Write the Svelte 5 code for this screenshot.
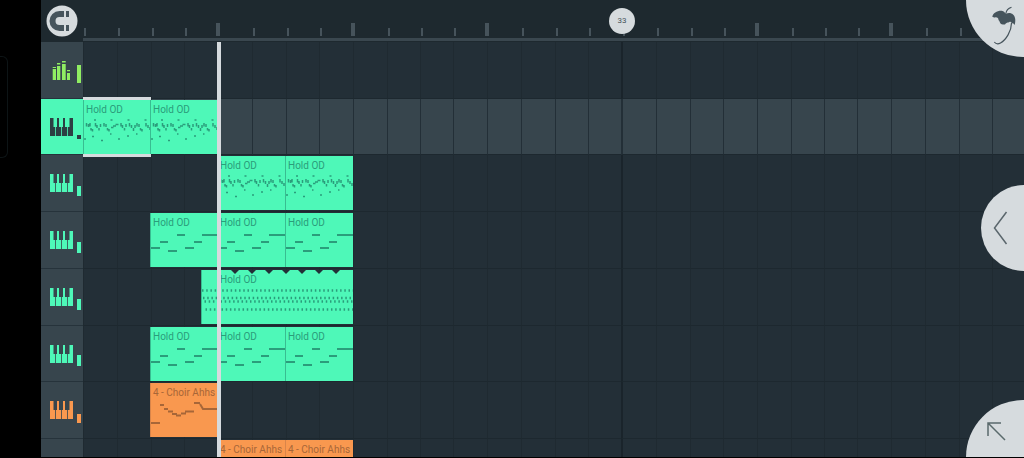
<script>
  const cells = Array.from({ length: 36 }, (_, i) => i);

  const melody = 'M0 35h9M9 29h8M17 38h9M26 22h8M34 35h9M43 29h8M51 22h17';
  const choir =
    'M0 40h9M9 22h4M13 26h4M17 28.500h5M21 31h5M25 32.500h5M30 30.500h5M34 28.500h9M43 20h6M49 21l3 5h16';
  const riff =
    'M2.500 23v3.500M4.500 24v3M6 23v3.500M7 28v2.500M8.500 29v2.500M10 20h2M11.500 23v3.500M13 25v3M15 28v2.500M16.500 24v3' +
    'M20 23v3.500M22 24v3M23.500 28v2.500M25 29v2.500M26.500 20h2M27 27.500h2.500M29 26h3M31.500 24.500h3' +
    'M37 23v3.500M38.500 25v3M40.500 28v2.500M43.500 20h2M42 24v3M45.500 23v3.500M47.500 25v3M49.500 28v3M51 25v3' +
    'M53 23v3.500M55 24v3M56.500 28v2.500M58 29v2.500M60.500 20h2M62 23v3.500M64 25v3M66 27v3' +
    'M8 36.500h2M17 40.500h2M0 39h2M34 39h2M43 36h2M52 34h1.500M26 34h1.500';

  const tracks = [
    { name: 'Master', icon: 'mixer', tone: 'lime', level: 18, clips: [] },
    {
      name: 'Keys 1', icon: 'piano', tone: 'mint', level: 4, selected: true,
      clips: [
        { at: 1, span: 2, label: 'Hold OD', notes: riff, marked: true },
        { at: 3, span: 2, label: 'Hold OD', notes: riff }
      ]
    },
    {
      name: 'Keys 2', icon: 'piano', tone: 'mint', level: 10,
      clips: [
        { at: 5, span: 2, label: 'Hold OD', notes: riff },
        { at: 7, span: 2, label: 'Hold OD', notes: riff }
      ]
    },
    {
      name: 'Keys 3', icon: 'piano', tone: 'mint', level: 11,
      clips: [
        { at: 3, span: 2, label: 'Hold OD', notes: melody },
        { at: 5, span: 2, label: 'Hold OD', notes: melody },
        { at: 7, span: 2, label: 'Hold OD', notes: melody }
      ]
    },
    {
      name: 'Keys 4', icon: 'piano', tone: 'mint', level: 11,
      clips: [
        { at: 4, span: 1, label: '', half: true, pulse: true },
        { at: 5, span: 4, label: 'Hold OD', pulse: true, notched: true }
      ]
    },
    {
      name: 'Keys 5', icon: 'piano', tone: 'mint', level: 11,
      clips: [
        { at: 3, span: 2, label: 'Hold OD', notes: melody },
        { at: 5, span: 2, label: 'Hold OD', notes: melody },
        { at: 7, span: 2, label: 'Hold OD', notes: melody }
      ]
    },
    {
      name: 'Choir 1', icon: 'piano', tone: 'amber', level: 9,
      clips: [{ at: 3, span: 2, label: '4 - Choir Ahhs', notes: choir }]
    },
    {
      name: 'Choir 2', icon: 'piano', tone: 'amber', level: 9,
      clips: [
        { at: 5, span: 2, label: '4 - Choir Ahhs', notes: choir },
        { at: 7, span: 2, label: '4 - Choir Ahhs', notes: choir }
      ]
    }
  ];
</script>

<main class="app">
  <aside class="gutter"><span class="drawer"></span></aside>

  <section class="playlist">
    <header class="top">
      <button class="snap" aria-label="Snap">
        <svg width="32" height="32" viewBox="0 0 32 32">
          <circle cx="16" cy="16" r="15.500" fill="#d6dbde" />
          <path d="M18 9h-4.500a7 7 0 0 0 0 14h4.500" fill="none" stroke="#46545c" stroke-width="6" />
          <path d="M20 6h3v6h-3zM20 20h3v6h-3z" fill="#46545c" />
        </svg>
      </button>
      <div class="ruler beats">
        {#each cells as i}
          <span class="tick" class:bar={i > 0 && i % 4 === 0 && i !== 16}>
            {#if i === 16}<span class="position">33</span>{/if}
          </span>
        {/each}
      </div>
    </header>

    <div class="tracks">
      {#each tracks as track}
        <div class="track {track.tone}" class:selected={track.selected}>
          <button class="head" aria-label={track.name}>
            {#if track.icon === 'mixer'}
              <svg class="icon" width="23" height="19" viewBox="0 0 23 19">
                <path d="M2.700 8h3.300v11H2.700zM7 5h3.300v14H7zM12 3h3.700v16H12zM17 12h3v7h-3zM2.700 6h3.300v1H2.700zM7 2h3.300v1.500H7zM12 0h3.700v1.500H12zM17 9h3v1.200h-3z" fill="currentColor" />
              </svg>
            {:else}
              <svg class="icon" width="23" height="18" viewBox="0 0 23 18">
                <path d="M0 0h3.500v9h1.700v9H0zM7 0h2v9h2.200v9H6V9h1zM13 0h2v9h2.200v9H12V9h1zM19.500 0H23v18h-5V9h1.500z" fill="currentColor" />
              </svg>
            {/if}
            <span class="level" style="height: {track.level}px"></span>
          </button>

          <div class="lane beats">
            {#each cells as i}
              <span class="cell" class:strong={i === 16} style="grid-column: {i + 1}"></span>
            {/each}
            {#each track.clips as clip}
              <div
                class="clip"
                class:half={clip.half}
                class:marked={clip.marked}
                style="grid-column: {clip.at} / span {clip.span}"
              >
                <span class="label">{clip.label}</span>
                <svg class="notes" width="100%" height="54">
                  {#if clip.pulse}
                    <g fill="none" stroke="currentColor" stroke-width="2.500" stroke-dasharray="1.500 2.710">
                      <path d="M0 20.500h135M1 28h135M2.500 31.500h135M3.500 39.500h135" />
                    </g>
                  {:else}
                    <path d={clip.notes} fill="none" stroke="currentColor" stroke-width={clip.notes === riff ? 1.5 : 2} />
                  {/if}
                  {#if clip.notched}
                    <path d="M13 0h8l-4 4zM30 0h8l-4 4zM47 0h8l-4 4zM64 0h8l-4 4zM80 0h8l-4 4zM97 0h8l-4 4zM114 0h8l-4 4z" fill="#232f37" />
                  {/if}
                </svg>
              </div>
            {/each}
          </div>
        </div>
      {/each}
      <span class="playhead"></span>
    </div>

    <button class="round tools" aria-label="Main menu">
      <svg width="28" height="46" viewBox="0 0 28 46">
        <path d="M2.300 16.700C3 13 7 10.500 11.700 10.700C14 11 15 12.500 15.700 14C18 12.500 21 12.500 23 14.500C26 17 25.500 22 24.700 25C23.500 23.500 23 23 22 23.500C21 21.500 19.500 21.500 18.500 22.500C17 22.500 16 23 15 24.500C13.500 24.500 12 24.500 11 24C9.500 23 10 21 8.500 20C8.500 18 7 17 5 17.500C4 17.300 3 17.300 2.300 16.700Z" fill="#46545c" />
        <path d="M15.700 14C16 12 17.500 8.500 21.500 7.300M21.500 23C21.500 31 16 40 10.500 43C8 44.300 5.500 43.500 4.300 42" fill="none" stroke="#46545c" stroke-width="1.200" />
      </svg>
    </button>
    <button class="round back" aria-label="Open panel">
      <svg width="16" height="36" viewBox="0 0 16 36">
        <path d="M13.500 2L1.500 18L13.500 34" fill="none" stroke="#5a666c" stroke-width="1.500" />
      </svg>
    </button>
    <button class="round expand" aria-label="Expand">
      <svg width="19" height="19" viewBox="0 0 19 19">
        <path d="M1 14V1H14M1 1L18 18" fill="none" stroke="#5a6a6c" stroke-width="1.500" />
      </svg>
    </button>
  </section>
</main>

<style>
  :global(body) {
    margin: 0;
    background: #000;
  }

  .app {
    box-sizing: border-box;
    display: flex;
    height: 100vh;
    padding-bottom: 1px;
    background: #000;
    font-family: Roboto, sans-serif;
  }

  button {
    margin: 0;
    padding: 0;
    border: 0;
    background: none;
    color: inherit;
    font: inherit;
  }

  svg {
    display: block;
  }

  .gutter {
    flex: 0 0 41px;
    display: flex;
    align-items: flex-start;
  }

  .drawer {
    width: 7px;
    height: 100px;
    margin-top: 56px;
    border: 1px solid #0d1416;
    border-left: 0;
    border-radius: 0 6px 6px 0;
  }

  .playlist {
    position: relative;
    flex: 1;
    min-width: 0;
    display: flex;
    flex-direction: column;
    overflow: hidden;
    background: #1e292f;
  }

  .top {
    flex: 0 0 42px;
    display: flex;
  }

  .snap {
    flex: 0 0 42px;
    display: flex;
    align-items: center;
    justify-content: center;
  }

  .beats {
    flex: 1;
    min-width: 0;
    display: grid;
    grid-auto-flow: column;
    grid-auto-columns: 34px 34px 33px 34px 34px 34px 33px 34px 34px 33px 33px 34px;
  }

  .ruler {
    box-sizing: border-box;
    height: 41px;
    align-items: end;
    padding-bottom: 2px;
    border-bottom: 3px solid #3a474f;
  }

  .tick {
    position: relative;
    width: 2px;
    height: 8px;
    margin-left: 1px;
    background: #46535b;
  }

  .tick.bar {
    width: 4px;
    height: 13px;
    margin-left: -2px;
  }

  .position {
    position: absolute;
    left: -14px;
    bottom: 2px;
    width: 26px;
    height: 26px;
    border-radius: 50%;
    background: #d6dbde;
    color: #46545c;
    font-size: 8px;
    line-height: 26px;
    text-align: center;
  }

  .tracks {
    position: relative;
    flex: 1;
    min-height: 0;
    display: grid;
    grid-auto-rows: 57px 56px 57px 57px;
    overflow: hidden;
  }

  .track {
    display: flex;
    min-width: 0;
  }

  .lime {
    --tone: #90ee62;
  }

  .mint {
    --tone: #4ef8b8;
    --ink: #2b9d7b;
  }

  .amber {
    --tone: #f9984f;
    --ink: #a76638;
  }

  .head {
    flex: 0 0 42px;
    box-sizing: border-box;
    display: flex;
    align-items: center;
    justify-content: flex-end;
    gap: 4px;
    padding-right: 2px;
    border-bottom: 1px solid #26333b;
    background: #37454d;
    color: var(--tone);
  }

  .level {
    align-self: flex-end;
    width: 4px;
    margin-bottom: 15px;
    background: currentColor;
  }

  .selected .head {
    background: var(--tone);
    color: #2c3f43;
  }

  .lane {
    background: #232f37;
  }

  .cell {
    grid-row: 1;
    border-left: 1px solid #1f2a31;
    border-bottom: 1px solid #1d282f;
  }

  .cell.strong {
    margin-left: -1px;
    border-left: 2px solid #1a242b;
  }

  .selected .lane {
    background: #37454d;
  }

  .selected .cell {
    border-left-color: #232f37;
  }

  .clip {
    position: relative;
    grid-row: 1;
    box-sizing: border-box;
    height: 54px;
    margin-top: 1px;
    margin-left: -1px;
    border-left: 1px solid #38bd91;
    background: var(--tone);
    color: var(--ink);
  }

  .amber .clip {
    border-left-color: #d9854a;
  }

  .clip.half {
    margin-left: 17px;
  }

  .clip.marked {
    margin-left: 0;
    box-shadow: 0 -3px #d6dbde, 0 3px #d6dbde;
  }

  .label {
    position: absolute;
    top: 3px;
    left: 2px;
    font-size: 10px;
    line-height: 14px;
    white-space: nowrap;
  }

  .playhead {
    position: absolute;
    top: 0;
    bottom: 0;
    left: 176px;
    width: 4px;
    background: #d6dbde;
  }

  .round {
    position: absolute;
    display: flex;
    border-radius: 50%;
    background: #d6dbde;
  }

  .tools {
    top: -57px;
    right: -56px;
    width: 114px;
    height: 114px;
    padding: 57px 0 0 24px;
  }

  .back {
    top: 185px;
    right: -43px;
    width: 86px;
    height: 86px;
    padding: 25px 0 0 12px;
  }

  .expand {
    right: -56px;
    bottom: -57px;
    width: 114px;
    height: 114px;
    padding: 22px 0 0 21px;
  }
</style>
